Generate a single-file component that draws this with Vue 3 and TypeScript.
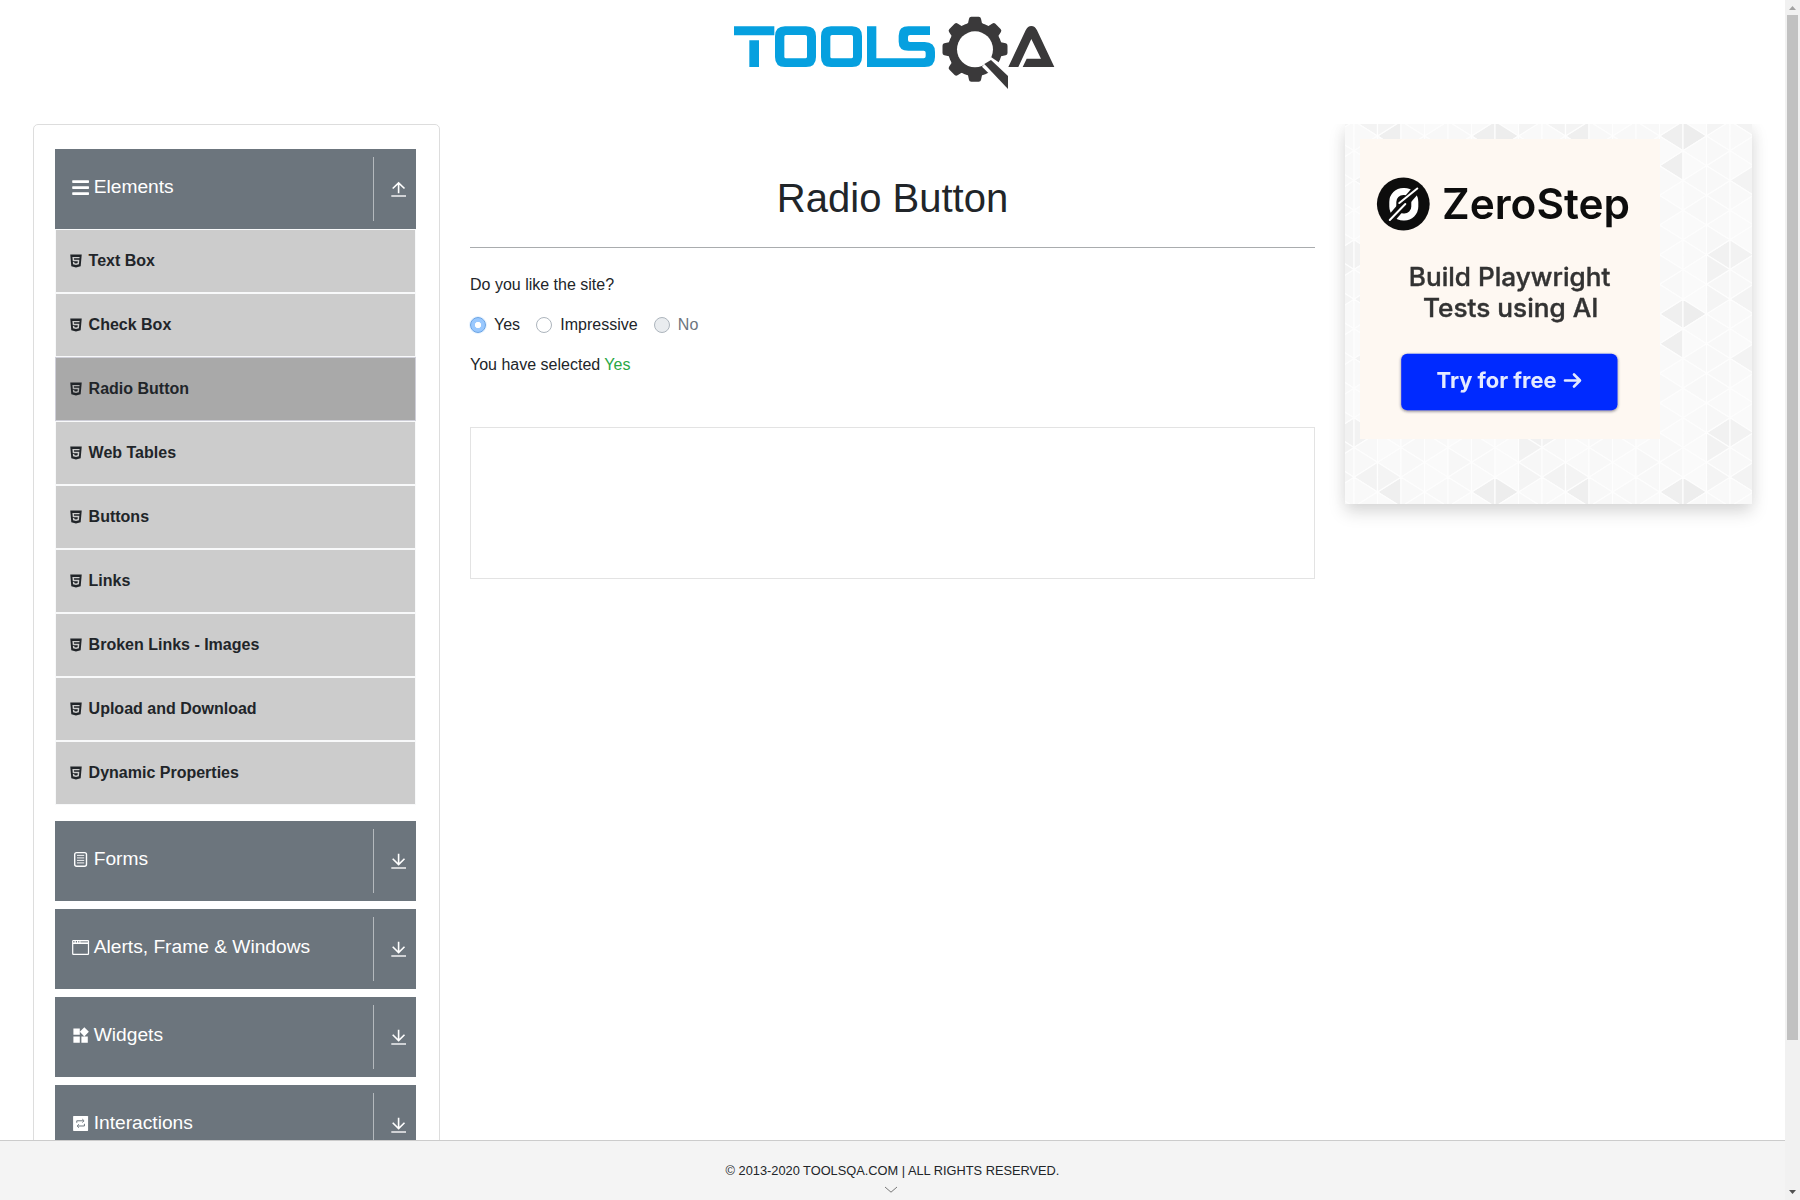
<script setup lang="ts">
import { ref } from 'vue'

interface Group {
  name: string
  icon: 'bars' | 'form' | 'window' | 'widgets' | 'loop'
  open: boolean
  items: string[]
}

const groups: Group[] = [
  {
    name: 'Elements',
    icon: 'bars',
    open: true,
    items: [
      'Text Box',
      'Check Box',
      'Radio Button',
      'Web Tables',
      'Buttons',
      'Links',
      'Broken Links - Images',
      'Upload and Download',
      'Dynamic Properties',
    ],
  },
  { name: 'Forms', icon: 'form', open: false, items: [] },
  { name: 'Alerts, Frame & Windows', icon: 'window', open: false, items: [] },
  { name: 'Widgets', icon: 'widgets', open: false, items: [] },
  { name: 'Interactions', icon: 'loop', open: false, items: [] },
]

const activeItem = 'Radio Button'
const selected = ref('Yes')
const options = [
  { label: 'Yes', disabled: false },
  { label: 'Impressive', disabled: false },
  { label: 'No', disabled: true },
]

const teeth = [0, 45, 90, 180, 225, 270, 315]

// Triangular backdrop tile: 8 columns by 6 rows, repeated across the banner.
const COL = 23.5
const ROW = 178 / 6
const dark: Record<string, string> = {
  '5L0': '#efefef',
  '6R0': '#ededed',
  '5L1': '#efefef',
  '1L0': '#efefef',
  '0L0': '#f3f3f3',
  '1R0': '#f4f4f4',
  '7R0': '#f4f4f4',
  '7L4': '#f1f1f1',
  '0R4': '#f2f2f2',
  '7R5': '#f2f2f2',
  '0L2': '#f3f3f3',
}
const shades = ['#f9f9f9', '#f8f8f8', '#fafafa', '#f9f9f9', '#f7f7f7', '#fafafa', '#f8f8f8']
const triangles: { points: string; fill: string }[] = []
for (let k = -1; k <= 8; k++) {
  const x0 = 9 + k * COL
  const x1 = x0 + COL
  const col = (k + 8) % 8
  const left = col % 2 ? 12 : -2.8
  const right = col % 2 ? -2.8 : 12
  for (let j = -1; j <= 7; j++) {
    const row = (j + 6) % 6
    const yl = left + j * ROW
    const yr = right + j * ROW
    triangles.push({
      points: `${x0},${yl} ${x1},${yl - ROW / 2} ${x1},${yl + ROW / 2}`,
      fill: dark[`${col}L${row}`] ?? shades[(col * 5 + row * 3 + ((col * row) % 4)) % 7],
    })
    triangles.push({
      points: `${x1},${yr} ${x0},${yr - ROW / 2} ${x0},${yr + ROW / 2}`,
      fill: dark[`${col}R${row}`] ?? shades[(col * 3 + row * 4 + ((col + row) % 3)) % 7],
    })
  }
}
</script>

<template>
  <div class="window">
    <div class="page">
      <header>
        <svg class="logo" width="345" height="110" viewBox="0 0 1035 330" aria-label="Tools QA">
          <g fill="#06a0df" fill-rule="evenodd">
            <path d="M42 79H163V106H42zM88 121H117V201H88z" />
            <path d="M195 79H258Q288 79 288 109V171Q288 201 258 201H195Q165 201 165 171V109Q165 79 195 79zM198 105Q193 105 193 110V170Q193 175 198 175H256Q261 175 261 170V110Q261 105 256 105z" />
            <path d="M333 79H396Q426 79 426 109V171Q426 201 396 201H333Q303 201 303 171V109Q303 79 333 79zM336 105Q331 105 331 110V170Q331 175 336 175H394Q399 175 399 170V110Q399 105 394 105z" />
            <path d="M441 79H469V175H611Q617 175 617 169V158Q617 152 611 152H565Q536 152 536 125V107Q536 79 565 79H630V105H570Q564 105 564 111V120Q564 126 570 126H614Q645 126 645 156V171Q645 201 614 201H441z" />
          </g>
          <g fill="#3a393a">
            <circle cx="765" cy="148" r="81" />
            <path v-for="a in teeth" :key="a" :transform="`rotate(${a} 765 148)`" d="M732 78L744 70L747 56Q748 50.5 754 50.5H776Q782 50.5 783 56L786 70L798 78L784 96H746z" />
          </g>
          <circle cx="765" cy="148" r="54" fill="#fff" />
          <path d="M786 200L813 171L838 188L880 228V290L802 216z" fill="#fff" />
          <path d="M793 192L813 180L864 228V267z" fill="#3a393a" />
          <path d="M865 201L917 91Q923 78 934 78Q945 78 951 91L1003 201H908L920 176H963L934 117L895 201z" fill="#3a393a" />
        </svg>
      </header>

      <div class="body">
        <aside class="sidebar">
          <section v-for="g in groups" :key="g.name" class="group">
            <div class="group-head">
              <svg class="group-icon" viewBox="0 0 19.2 19.2" fill="#fff">
                <path v-if="g.icon === 'bars'" transform="translate(1.2 0) scale(.0375)" d="M16 132h416c8.837 0 16-7.163 16-16V76c0-8.837-7.163-16-16-16H16C7.163 60 0 67.163 0 76v40c0 8.837 7.163 16 16 16zm0 160h416c8.837 0 16-7.163 16-16v-40c0-8.837-7.163-16-16-16H16c-8.837 0-16 7.163-16 16v40c0 8.837 7.163 16 16 16zm0 160h416c8.837 0 16-7.163 16-16v-40c0-8.837-7.163-16-16-16H16c-8.837 0-16 7.163-16 16v40c0 8.837 7.163 16 16 16z" />
                <g v-else-if="g.icon === 'form'" fill="none" stroke="#fff">
                  <rect x="3.7" y="2.6" width="11.8" height="13.7" rx="2" stroke-width="1.4" />
                  <path d="M6 5.4h7.2M6 7.9h7.2M6 10.4h7.2M6 12.9h7.2" stroke-width=".9" />
                </g>
                <g v-else-if="g.icon === 'window'">
                  <path fill-rule="evenodd" d="M2.3 1.9h14.6q1.2 0 1.2 1.2v12.6q0 1.2-1.2 1.2H2.3q-1.2 0-1.2-1.2V3.1q0-1.2 1.2-1.2zM2.3 5.9v9.4q0 .5.5.5h13.6q.5 0 .5-.5V5.9zM2.3 3.1v1.5h1.2V3.1zM4.8 3.1v1.5h1.2V3.1zM7.3 3.1v1.5h1V3.1zM9.6 3.1v1.5h7.3V3.1z" />
                  <path d="M9.6 3.1h7.3v1.5H9.6z" fill-opacity=".45" />
                </g>
                <path v-else-if="g.icon === 'widgets'" transform="scale(.8)" d="M13 13v8h8v-8h-8zM3 21h8v-8H3v8zM3 3v8h8V3H3zm13.66-1.31L11 7.34 16.66 13l5.66-5.66-5.66-5.66z" />
                <g v-else>
                  <rect x="2.1" y="1.9" width="15" height="15" rx=".6" />
                  <g fill="none" stroke="#6c757d" stroke-width="1">
                    <path d="M5.8 8.8V6.8h6.4M13.4 9.8V12H7" />
                    <path d="M11.3 5.1l1.8 1.7-1.8 1.7M7.9 10.3L6.1 12l1.8 1.7" />
                  </g>
                </g>
              </svg>
              <span class="group-name">{{ g.name }}</span>
              <span class="toggle">
                <svg width="16" height="17" viewBox="0 0 16 17" fill="none" stroke="#fff" stroke-width="1.6">
                  <path v-if="g.open" d="M7.6 12.2V1.8M1.7 7.5l5.9-5.7 5.9 5.7" />
                  <path v-else d="M7.6 .8V11.6M1.7 5.8l5.9 5.8 5.9-5.8" />
                  <path d="M.3 15H15" stroke-opacity=".85" />
                </svg>
              </span>
            </div>
            <ul v-if="g.open" class="items">
              <li v-for="item in g.items" :key="item" :class="{ active: item === activeItem }">
                <svg width="16" height="16" viewBox="0 0 1024 1024" fill="#212529">
                  <path d="M145.2 96l66 746.6L512 928l299.6-85.4L878.9 96H145.2zm595 177.1l-4.8 47.2-1.7 19.5H382.3l8.2 94.2h335.1l-3.3 24.3-21.2 242.2-1.7 16.2-187 51.6v.3h-1.2l-.3.1v-.1h-.1l-188.6-52L310.8 572h91.1l6.5 73.2 102.4 27.7h.4l102-27.6 11.4-118.6H510.9v-.1H306l-22.8-253.5-1.7-24.3h460.3l-1.6 24.3z" />
                </svg>
                <span>{{ item }}</span>
              </li>
            </ul>
          </section>
        </aside>

        <main>
          <h1>Radio Button</h1>
          <p class="question">Do you like the site?</p>
          <div class="radios">
            <label v-for="o in options" :key="o.label" :class="{ disabled: o.disabled }">
              <span class="radio" :class="{ checked: o.label === selected }" @click="!o.disabled && (selected = o.label)"></span>
              <span>{{ o.label }}</span>
            </label>
          </div>
          <p class="result">You have selected <span class="success">{{ selected }}</span></p>
          <div class="frame"></div>
        </main>

        <aside class="banner">
          <svg width="407" height="380" viewBox="0 0 407 380">
            <defs>
              <pattern id="tile" width="188" height="178" patternUnits="userSpaceOnUse">
                <rect width="188" height="178" fill="#fafafa" />
                <polygon v-for="(t, i) in triangles" :key="i" :points="t.points" :fill="t.fill" stroke="#fefefe" stroke-width="1.2" stroke-linejoin="round" />
              </pattern>
              <filter id="glow" x="-10%" y="-20%" width="120%" height="150%">
                <feDropShadow dx="0" dy="1" stdDeviation="1.8" flood-color="#223" flood-opacity=".6" />
              </filter>
              <filter id="soft" x="-5%" y="-5%" width="110%" height="110%">
                <feGaussianBlur stdDeviation=".4" />
              </filter>
            </defs>
            <rect width="407" height="380" fill="url(#tile)" />
            <g transform="translate(15 15)" font-family="Inter, sans-serif">
              <rect width="300" height="300" fill="#fef8f2" />
              <g filter="url(#soft)">
                <circle cx="43.3" cy="65" r="26.4" fill="#111" />
                <g transform="translate(43.3 65)">
                  <rect x="-10.5" y="-12.5" width="22" height="25.5" rx="10.5" fill="none" stroke="#fff" stroke-width="7" />
                  <path d="M-15 18L16 -18" stroke="#111" stroke-width="8.5" />
                  <path d="M-13.5 16L2 0M-4 -1L14 -15.5" stroke="#fff" stroke-width="2" stroke-linecap="round" />
                </g>
                <text x="82" y="80" font-size="42.5" font-weight="600" fill="#111" textLength="188" lengthAdjust="spacingAndGlyphs">ZeroStep</text>
                <g font-size="25.6" font-weight="500" fill="#333" stroke="#333" stroke-width=".4">
                  <text x="48.8" y="147" textLength="201.5" lengthAdjust="spacingAndGlyphs">Build Playwright</text>
                  <text x="63" y="178.3" textLength="175.5" lengthAdjust="spacingAndGlyphs">Tests using AI</text>
                </g>
                <rect x="41.2" y="214.7" width="216.3" height="56.6" rx="6" fill="#052cff" filter="url(#glow)" />
                <text x="76.5" y="249" font-size="21.5" font-weight="700" fill="#e4eaff" textLength="120" lengthAdjust="spacingAndGlyphs">Try for free</text>
                <path d="M205 241.5H219.4M214 235.5L220 241.5L214 247.5" fill="none" stroke="#e4eaff" stroke-width="2.6" stroke-linecap="round" stroke-linejoin="round" />
              </g>
            </g>
          </svg>
        </aside>
      </div>

      <footer>
        <span>© 2013-2020 TOOLSQA.COM | ALL RIGHTS RESERVED.</span>
        <svg width="14" height="8" viewBox="0 0 14 8" fill="none" stroke="#777" stroke-width="1"><path d="M1 1l6 5.2L13 1" /></svg>
      </footer>
    </div>

    <div class="scrollbar">
      <svg width="15" height="15"><path d="M4 10L7.5 6L11 10z" fill="#a3a3a3" /></svg>
      <div class="thumb"></div>
      <svg width="15" height="15"><path d="M4 5L7.5 9L11 5z" fill="#505050" /></svg>
    </div>
  </div>
</template>

<style>
body {
  margin: 0;
  overflow: hidden;
}
</style>

<style scoped>
.window {
  display: flex;
  width: 1800px;
  height: 1200px;
  overflow: hidden;
  background: #fff;
  color: #212529;
  font: 16px/24px "Liberation Sans", Arial, sans-serif;
}
.page {
  display: flex;
  flex-direction: column;
  width: 1785px;
  height: 1200px;
}
header {
  display: flex;
  justify-content: center;
  height: 124px;
  flex: none;
}
.body {
  display: flex;
  align-items: flex-start;
  flex: 1;
  min-height: 0;
  overflow: hidden;
  padding: 0 33px;
}
.sidebar {
  box-sizing: border-box;
  width: 407px;
  height: 1250px;
  flex: none;
  border: 1px solid #ddd;
  border-radius: 5px;
  padding: 24px 23px 0 21px;
}
.group {
  margin-bottom: 8px;
}
.group-head {
  box-sizing: border-box;
  display: flex;
  height: 80px;
  padding: 8px 0 8px 16px;
  background: #6c757d;
  color: #fff;
  font-size: 19.2px;
}
.group-icon {
  width: 19.2px;
  height: 19.2px;
  margin: 21.1px 3.5px 0 0;
}
.group-name {
  flex: 1;
  padding-top: 18px;
}
.toggle {
  box-sizing: border-box;
  width: 43px;
  border-left: 1px solid #b4b9bd;
  padding: 24px 0 0 17px;
}
.toggle svg {
  display: block;
}
.items {
  list-style: none;
  margin: 0 0 16px;
  padding: 0;
}
.items li {
  box-sizing: border-box;
  display: flex;
  height: 64px;
  border: 1px solid #f8f9fa;
  background: #ccc;
  padding: 19px 0 0 12px;
  font-weight: 700;
}
.items li svg {
  margin: 3.5px 4.6px 0 0;
}
.items li.active {
  background: #a9a9a9;
  border-color: #cfcfd8;
}
main {
  width: 845px;
  margin: 0 30px;
  flex: none;
}
h1 {
  margin: 0;
  padding: 50px 0 25px;
  border-bottom: 1px solid #a9acae;
  font-size: 40px;
  font-weight: 400;
  line-height: 48px;
  text-align: center;
}
p {
  margin: 0;
}
.question {
  padding-top: 25px;
}
.radios {
  display: flex;
  padding-top: 16px;
}
.radios label {
  display: flex;
  align-items: flex-start;
  margin-right: 16.2px;
}
.radio {
  box-sizing: border-box;
  width: 16px;
  height: 16px;
  margin: 4px 8px 0 0;
  border: 1px solid #adb5bd;
  border-radius: 50%;
  background: #fff;
}
.radio.checked {
  border-color: #69a3e4;
  background: radial-gradient(circle, #fff 2.8px, #99c8fe 3.5px);
  box-shadow: 0 0 0 1px rgba(0, 123, 255, 0.1);
}
.disabled {
  color: #6c757d;
}
.disabled .radio {
  background: #e9ecef;
}
.result {
  padding-top: 16px;
}
.success {
  color: #28a745;
}
.frame {
  box-sizing: border-box;
  height: 152px;
  margin-top: 50px;
  border: 1px solid #e3e3e3;
}
.banner {
  width: 407px;
  height: 380px;
  flex: none;
  box-shadow: 0 8px 16px rgba(0, 0, 0, 0.15), 0 0 16px rgba(0, 0, 0, 0.04);
}
.banner svg {
  display: block;
}
footer {
  box-sizing: border-box;
  display: flex;
  flex-direction: column;
  align-items: center;
  height: 60px;
  flex: none;
  border-top: 1px solid #ccc;
  background: #f4f4f4;
  padding-top: 18px;
  font-size: 12.8px;
}
footer svg {
  margin: 3px 3px 0 0;
}
.scrollbar {
  display: flex;
  flex-direction: column;
  align-items: center;
  width: 15px;
  background: #f1f1f1;
}
.thumb {
  width: 11px;
  height: 1025px;
  margin-bottom: auto;
  background: #c1c1c1;
}
</style>
